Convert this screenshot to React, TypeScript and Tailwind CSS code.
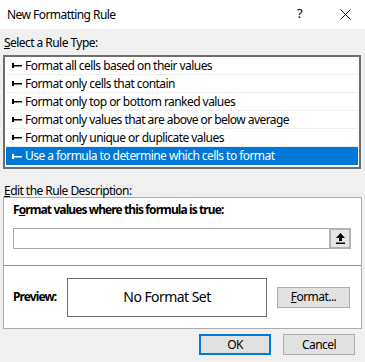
import React from 'react';

const rules = [
  'Format all cells based on their values',
  'Format only cells that contain',
  'Format only top or bottom ranked values',
  'Format only values that are above or below average',
  'Format only unique or duplicate values',
];

const Bullet: React.FC<{ color: string }> = ({ color }) => (
  <svg width="10" height="7" viewBox="0 0 10 7" className="shrink-0">
    <rect x="0" y="1" width="2" height="5" fill={color} />
    <rect x="2" y="3" width="8" height="1.5" fill={color} />
  </svg>
);

export default function App() {
  return (
    <div
      className="w-[365px] h-[362px] bg-[#f0f0f0] text-[12px] tracking-[-0.55px] text-black overflow-hidden"
      style={{ fontFamily: '"Noto Sans", "Open Sans", sans-serif' }}
    >
      {/* Title bar */}
      <div className="h-[29px] bg-white flex items-center pl-[7px] relative">
        <span className="leading-none">New Formatting Rule</span>
        <span className="absolute left-[297px] top-[7px] text-[13px] leading-none">?</span>
        <svg className="absolute left-[340px] top-[9px]" width="11" height="11" viewBox="0 0 11 11">
          <path d="M0.5 0.5 L10.5 10.5 M10.5 0.5 L0.5 10.5" stroke="#111" strokeWidth="1" />
        </svg>
      </div>

      <div className="px-[3px]">
        <div className="h-[26px] pl-[1px] flex items-center pt-[2px] leading-none">
          <span><span className="underline">S</span>elect a Rule Type:</span>
        </div>

        {/* Rule list */}
        <div className="w-[358px] h-[114px] border-2 border-[#6e6e6e] bg-white px-[1px] pb-[2px]">
          {rules.map((r) => (
            <div key={r} className="h-[18px] border-b border-[#f0f0f0] flex items-center gap-[3px] pl-[6px] leading-none">
              <Bullet color="#000" />
              <span>{r}</span>
            </div>
          ))}
          <div className="h-[18px] bg-[#0078d7] text-white flex items-center gap-[3px] pl-[6px] leading-none">
            <Bullet color="#fff" />
            <span>Use a formula to determine which cells to format</span>
          </div>
        </div>

        <div className="h-[28px] pl-[1px] flex items-center pt-[16px] leading-none">
          <span><span className="underline">E</span>dit the Rule Description:</span>
        </div>

        {/* Description box */}
        <div className="w-[359px] h-[132px] border border-[#adadad] bg-white flex flex-col">
          <div className="h-[68px] border-b border-[#8c8c8c] pl-[9px] pr-[10px]">
            <div className="h-[23px] flex items-center font-bold tracking-[-0.9px] leading-none">
              <span>F<span className="underline">o</span>rmat values where this formula is true:</span>
            </div>
            <div className="mt-[7px] h-[21px] flex">
              <div className="flex-1 border border-[#a6a6a6] border-r-0" />
              <div className="w-[22px] h-[21px] border-2 border-[#b4b4b4] bg-[#e6e6e6] flex items-center justify-center">
                <svg width="9" height="11" viewBox="0 0 9 11">
                  <path d="M4.5 0 L9 5 L6 5 L6 8 L3 8 L3 5 L0 5 Z" fill="#000" />
                  <rect x="0" y="9.5" width="9" height="1.5" fill="#000" />
                </svg>
              </div>
            </div>
          </div>
          <div className="flex-1 flex items-center pl-[9px] pr-[10px]">
            <span className="font-bold tracking-[-0.9px] w-[54px] leading-none">Preview:</span>
            <div className="w-[200px] h-[39px] border border-[#6e6e6e] flex items-center justify-center text-[14px] leading-none">
              No Format Set
            </div>
            <div className="ml-[10px] w-[73px] h-[21px] border border-[#adadad] bg-[#e1e1e1] flex items-center justify-center leading-none">
              <span><span className="underline">F</span>ormat...</span>
            </div>
          </div>
        </div>

        {/* Footer buttons */}
        <div className="mt-[5px] flex justify-end gap-[12px] pr-[7px]">
          <div className="w-[72px] h-[21px] border-2 border-[#0078d7] bg-[#e1e1e1] flex items-center justify-center leading-none">
            OK
          </div>
          <div className="w-[72px] h-[21px] border border-[#adadad] bg-[#e1e1e1] flex items-center justify-center leading-none">
            Cancel
          </div>
        </div>
      </div>
    </div>
  );
}
